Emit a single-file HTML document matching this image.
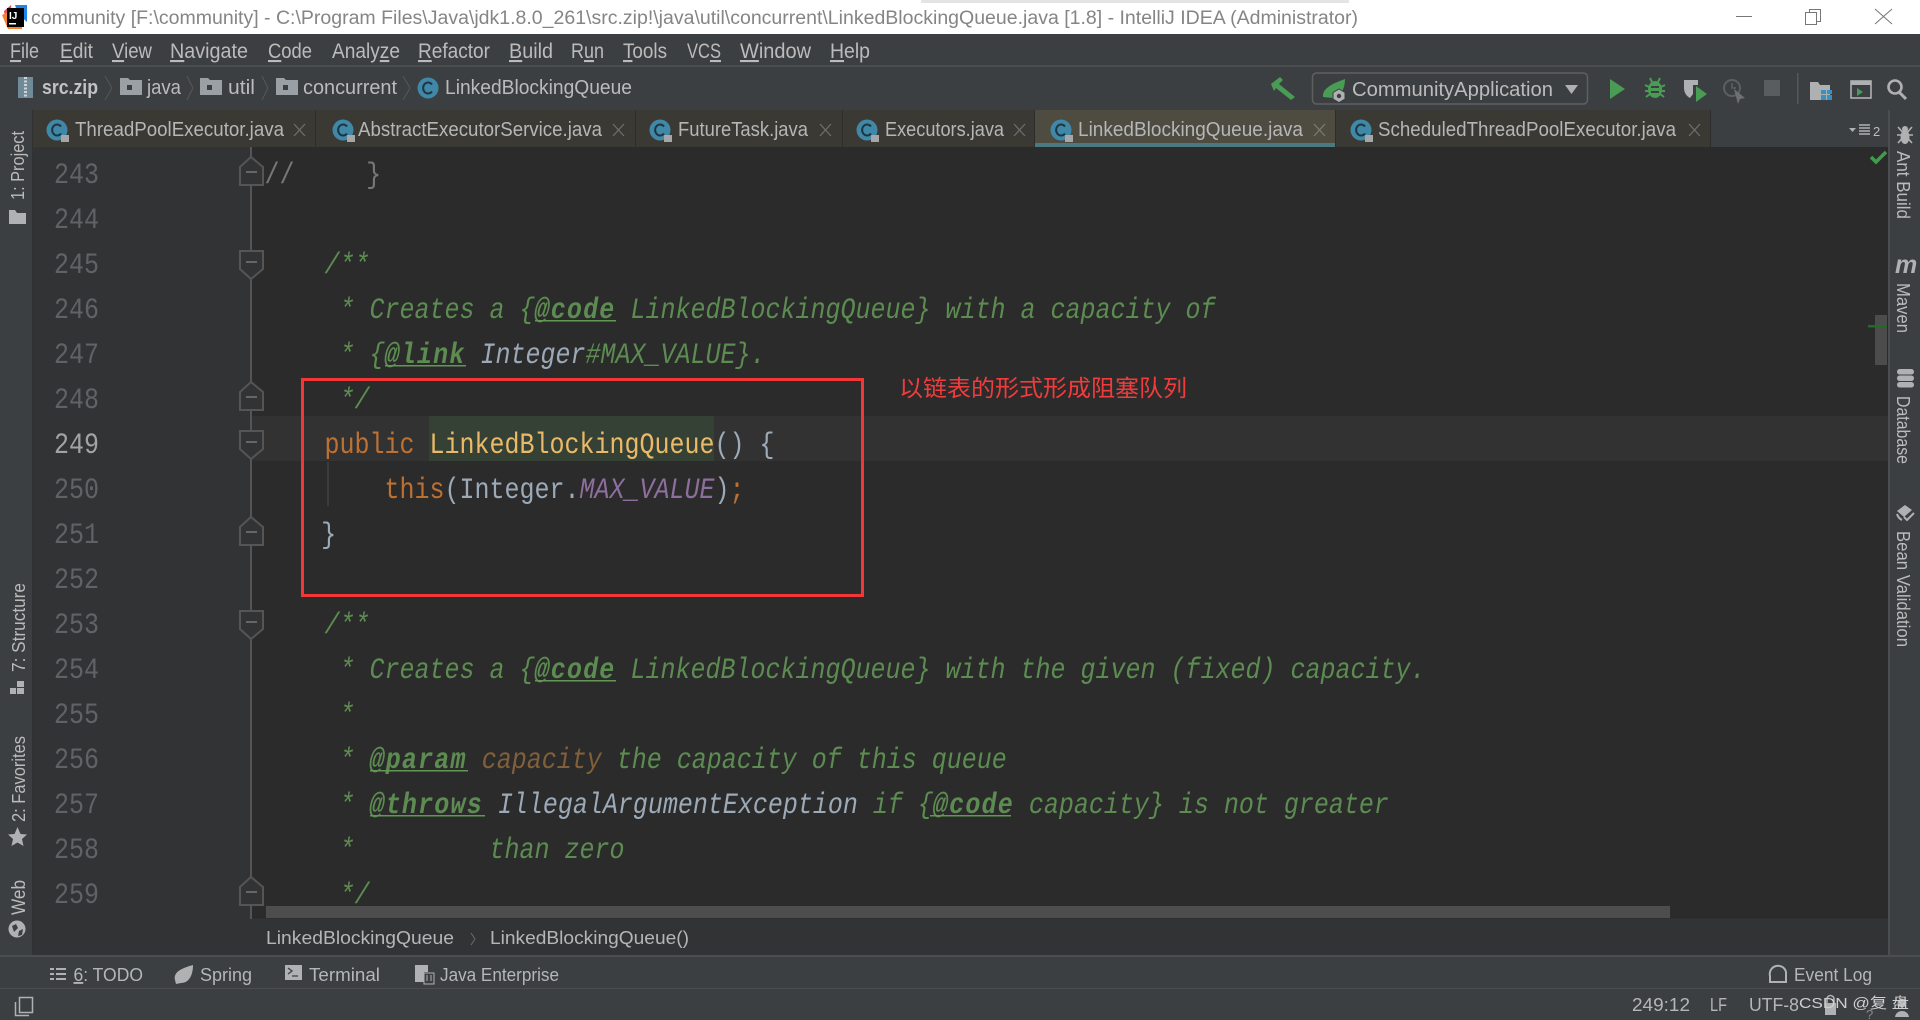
<!DOCTYPE html>
<html lang="en">
<head>
<meta charset="utf-8">
<title>IntelliJ IDEA</title>
<style>
html,body{margin:0;padding:0;background:#3c3f41;width:1920px;height:1020px;overflow:hidden}
svg{display:block}
text{font-family:"Liberation Sans","Noto Sans CJK SC",sans-serif;white-space:pre}
.m{font-size:21px;fill:#bbb}
.n{font-size:20px;fill:#bbb}
.t{font-size:20px;fill:#b4b6b8}
.b{font-size:18.5px;fill:#b4b6b8}
.v{font-size:18px;fill:#bbb}
.code text{font-family:"Liberation Mono",monospace;font-size:30px;fill:#a9b7c6;fill-opacity:.9}
.ln text{font-family:"Liberation Mono",monospace;font-size:30px;fill:#606366}
.d{fill:#629755;font-style:italic}
.dt{fill:#629755;font-style:italic;font-weight:bold;letter-spacing:1.44px}
.di{fill:#a9b7c6;font-style:italic}
.dp{fill:#8a653b;font-style:italic}
.k{fill:#cc7832}
.f{fill:#ffc66d}
.s{fill:#9876aa;font-style:italic}
.g{fill:#808080}
.u{text-decoration:underline}
.fold{fill:#313335;stroke:#555;stroke-width:2}
</style>
</head>
<body>
<svg xmlns="http://www.w3.org/2000/svg" width="1920" height="1020" viewBox="0 0 1920 1020">
<defs>
<g id="c"><circle cx="0" cy="0" r="10.5" fill="#3f88a8"/><path d="M4 -3.5A5 5.500 0 1 0 4 3.500" fill="none" stroke="#20353f" stroke-width="2"/></g>
<g id="cl"><use href="#c"/><rect x="4" y="5" width="8" height="7" fill="#a4a6a8"/></g>
<g id="fo"><path d="M0 3h8l2 2h12v15H0z" fill="#9aa0a4"/><rect x="7" y="10" width="5" height="5" fill="#3c3f41"/></g>
<path id="up" class="fold" d="M-11 28V10L0 0L12 10V28Z"/>
<path id="dn" class="fold" d="M-11 0H12V18L0 28L-11 18Z"/>
<rect id="mi" x="-6" y="-1" width="11" height="2" fill="#666"/>
</defs>

<!-- base -->
<rect width="1920" height="1020" fill="#3c3f41"/>

<!-- title bar -->
<rect width="1920" height="34" fill="#fff"/>
<rect x="921" y="0" width="428" height="3" fill="#e4e4e4"/>
<path d="M4 11L11 5L13 28L6 25Z" fill="#f04a6c"/>
<path d="M15 5H27L27 22L18 14Z" fill="#1f86e8"/>
<path d="M2 15L8 29H22V24L8 12Z" fill="#f9822c"/>
<rect x="7" y="8" width="17" height="19" fill="#000"/>
<text x="9" y="19" style="font-size:10px;font-weight:bold;fill:#fff">IJ</text>
<rect x="9" y="23" width="7" height="1.5" fill="#fff"/>
<text x="31" y="24" textLength="1327" lengthAdjust="spacingAndGlyphs" style="font-size:19px;fill:#858585">community [F:\community] - C:\Program Files\Java\jdk1.8.0_261\src.zip!\java\util\concurrent\LinkedBlockingQueue.java [1.8] - IntelliJ IDEA (Administrator)</text>
<path d="M1736 16.5H1752" stroke="#777" stroke-width="1"/>
<path d="M1805.5 12.5H1816.5V24.5H1805.5ZM1809.5 12.5V9.5H1820.5V21.5H1816.5" fill="none" stroke="#777"/>
<path d="M1875 9L1892 24M1892 9L1875 24" stroke="#777" stroke-width="1"/>

<!-- menu -->
<rect y="65" width="1920" height="2" fill="#4b4d4f"/>
<text class="m" x="10" y="58" textLength="29" lengthAdjust="spacingAndGlyphs"><tspan class="u">F</tspan>ile</text>
<text class="m" x="60" y="58" textLength="33" lengthAdjust="spacingAndGlyphs"><tspan class="u">E</tspan>dit</text>
<text class="m" x="112" y="58" textLength="40" lengthAdjust="spacingAndGlyphs"><tspan class="u">V</tspan>iew</text>
<text class="m" x="170" y="58" textLength="78" lengthAdjust="spacingAndGlyphs"><tspan class="u">N</tspan>avigate</text>
<text class="m" x="268" y="58" textLength="44" lengthAdjust="spacingAndGlyphs"><tspan class="u">C</tspan>ode</text>
<text class="m" x="332" y="58" textLength="68" lengthAdjust="spacingAndGlyphs">Analy<tspan class="u">z</tspan>e</text>
<text class="m" x="418" y="58" textLength="72" lengthAdjust="spacingAndGlyphs"><tspan class="u">R</tspan>efactor</text>
<text class="m" x="509" y="58" textLength="44" lengthAdjust="spacingAndGlyphs"><tspan class="u">B</tspan>uild</text>
<text class="m" x="571" y="58" textLength="33" lengthAdjust="spacingAndGlyphs">R<tspan class="u">u</tspan>n</text>
<text class="m" x="623" y="58" textLength="44" lengthAdjust="spacingAndGlyphs"><tspan class="u">T</tspan>ools</text>
<text class="m" x="687" y="58" textLength="34" lengthAdjust="spacingAndGlyphs">VC<tspan class="u">S</tspan></text>
<text class="m" x="740" y="58" textLength="71" lengthAdjust="spacingAndGlyphs"><tspan class="u">W</tspan>indow</text>
<text class="m" x="830" y="58" textLength="40" lengthAdjust="spacingAndGlyphs"><tspan class="u">H</tspan>elp</text>

<!-- nav bar -->
<rect x="18" y="77" width="15" height="21" fill="#6f8a99"/>
<path d="M25.5 77V98" stroke="#d0d4d6" stroke-width="3" stroke-dasharray="2 1.5"/>
<text class="n" x="42" y="94" textLength="56" lengthAdjust="spacingAndGlyphs" style="font-weight:bold;fill:#c0c2c4">src.zip</text>
<path d="M105 76L112 88L105 100" fill="none" stroke="#55585a" stroke-width="1"/>
<use href="#fo" x="120" y="75"/>
<text class="n" x="147" y="94" textLength="34" lengthAdjust="spacingAndGlyphs">java</text>
<path d="M187 76L193 88L187 100" fill="none" stroke="#55585a" stroke-width="1"/>
<use href="#fo" x="200" y="75"/>
<text class="n" x="228" y="94" textLength="27" lengthAdjust="spacingAndGlyphs">util</text>
<path d="M262 76L268 88L262 100" fill="none" stroke="#55585a" stroke-width="1"/>
<use href="#fo" x="276" y="75"/>
<text class="n" x="303" y="94" textLength="94" lengthAdjust="spacingAndGlyphs">concurrent</text>
<path d="M403 76L410 88L403 100" fill="none" stroke="#55585a" stroke-width="1"/>
<use href="#c" x="428" y="88"/>
<text class="n" x="445" y="94" textLength="187" lengthAdjust="spacingAndGlyphs">LinkedBlockingQueue</text>

<!-- toolbar right -->
<path d="M1271 84L1280 77L1283 80L1279 84L1295 97L1291 100L1276 88L1274 91Z" fill="#499c54"/>
<rect x="1312.5" y="73" width="275" height="31" rx="4" fill="none" stroke="#5e6060" stroke-width="1.5"/>
<path d="M1323 97C1322 89 1331 84 1345 79C1345 88 1341 97 1333 98Z" fill="#499c54"/>
<path d="M1339 89L1345 92.500V99L1339 102.500L1333 99V92.500Z" fill="#aeb0b2" stroke="#3c3f41"/>
<circle cx="1339" cy="96" r="2.2" fill="#3c3f41"/>
<text class="n" x="1352" y="96" textLength="201" lengthAdjust="spacingAndGlyphs">CommunityApplication</text>
<path d="M1565 85H1578L1571.5 94Z" fill="#aeb0b2"/>
<path d="M1610 79L1625 89L1610 99Z" fill="#499c54"/>
<!-- bug -->
<path d="M1650 78L1652 82M1660 78L1658 82M1645 85L1649 87M1665 85L1661 87M1645 91H1649M1665 91H1661M1646 97L1650 94M1664 97L1660 94" stroke="#499c54" stroke-width="2"/>
<ellipse cx="1655" cy="89.500" rx="7" ry="8.500" fill="#499c54"/>
<rect x="1651" y="86" width="8" height="2" fill="#3c3f41"/><rect x="1651" y="91" width="8" height="2" fill="#3c3f41"/>
<!-- coverage -->
<path d="M1684 80H1698V85H1693V94L1690 98C1686 96 1684 92 1684 88Z" fill="#aeb0b2"/>
<path d="M1696 86L1707 94L1696 102Z" fill="#499c54"/>
<circle cx="1732" cy="88" r="8" fill="none" stroke="#5d6062" stroke-width="2"/>
<path d="M1732 83V88H1736" fill="none" stroke="#5d6062" stroke-width="1.5"/>
<path d="M1734 89L1745 98L1740 99L1738 104Z" fill="#6e7072"/>
<rect x="1764" y="80" width="16" height="16" fill="#5a5d5f"/>
<rect x="1797" y="73" width="1.5" height="31" fill="#555759"/>
<path d="M1810 82H1818L1820 85H1830V100H1810Z" fill="#aeb0b2"/>
<rect x="1821" y="90" width="5" height="4" fill="#3592c4"/><rect x="1827" y="90" width="5" height="4" fill="#3592c4"/><rect x="1821" y="95" width="5" height="5" fill="#3592c4"/><rect x="1827" y="95" width="5" height="5" fill="#3592c4"/>
<rect x="1851" y="81" width="20" height="17" fill="none" stroke="#aeb0b2" stroke-width="1.6"/><rect x="1851" y="81" width="20" height="4" fill="#aeb0b2"/>
<path d="M1857 88L1863 92L1857 96Z" fill="#499c54"/>
<circle cx="1895" cy="87" r="6.5" fill="none" stroke="#aeb0b2" stroke-width="2.6"/>
<path d="M1899 92L1906 99" stroke="#aeb0b2" stroke-width="3"/>

<!-- tabs -->
<rect x="33" y="110" width="1677" height="37" fill="#3b3933"/>
<rect x="1035" y="110" width="300" height="33" fill="#4e4b41"/>
<rect x="1035" y="143" width="300" height="4" fill="#4a7a80"/>
<path d="M315.5 110V147M635.5 110V147M842.5 110V147M1034.5 110V147M1335.5 110V147M1710.5 110V147" stroke="#2d2d2d"/>
<use href="#cl" x="57" y="130"/>
<text class="t" x="75" y="136" textLength="209" lengthAdjust="spacingAndGlyphs">ThreadPoolExecutor.java</text>
<path d="M294 124L305 136M305 124L294 136" stroke="#6d6f71" stroke-width="1.2"/>
<use href="#cl" x="343" y="130"/>
<text class="t" x="358" y="136" textLength="244" lengthAdjust="spacingAndGlyphs">AbstractExecutorService.java</text>
<path d="M613 124L624 136M624 124L613 136" stroke="#6d6f71" stroke-width="1.2"/>
<use href="#cl" x="660" y="130"/>
<text class="t" x="678" y="136" textLength="130" lengthAdjust="spacingAndGlyphs">FutureTask.java</text>
<path d="M820 124L831 136M831 124L820 136" stroke="#6d6f71" stroke-width="1.2"/>
<use href="#cl" x="867" y="130"/>
<text class="t" x="885" y="136" textLength="119" lengthAdjust="spacingAndGlyphs">Executors.java</text>
<path d="M1014 124L1025 136M1025 124L1014 136" stroke="#6d6f71" stroke-width="1.2"/>
<use href="#cl" x="1061" y="130"/>
<text class="t" x="1078" y="136" textLength="225" lengthAdjust="spacingAndGlyphs">LinkedBlockingQueue.java</text>
<path d="M1314 124L1325 136M1325 124L1314 136" stroke="#7d7b72" stroke-width="1.2"/>
<use href="#cl" x="1361" y="130"/>
<text class="t" x="1378" y="136" textLength="298" lengthAdjust="spacingAndGlyphs">ScheduledThreadPoolExecutor.java</text>
<path d="M1689 124L1700 136M1700 124L1689 136" stroke="#6d6f71" stroke-width="1.2"/>
<path d="M1849 128H1856L1852.5 132Z" fill="#aeb0b2"/>
<path d="M1859 125H1870M1859 128H1870M1859 131H1870M1859 134H1870" stroke="#aeb0b2" stroke-width="1.5"/>
<text x="1873" y="136" style="font-size:13px;fill:#bbb">2</text>

<!-- editor -->
<rect x="33" y="147" width="1855" height="772" fill="#2b2b2b"/>
<rect x="33" y="147" width="218" height="772" fill="#313335"/>
<rect x="32" y="110" width="1" height="845" fill="#2f3133"/>
<rect x="251" y="416" width="1637" height="45" fill="#323232"/>
<rect x="429" y="416" width="285" height="45" fill="#344134"/>
<rect x="327" y="462" width="2" height="44" fill="#3b3b3b"/>

<!-- fold line + markers -->
<rect x="250" y="147" width="2" height="772" fill="#555"/>
<use href="#up" x="251" y="157"/><use href="#mi" x="252" y="172"/>
<use href="#dn" x="251" y="251"/><use href="#mi" x="252" y="262"/>
<use href="#up" x="251" y="382"/><use href="#mi" x="252" y="397"/>
<use href="#dn" x="251" y="431"/><use href="#mi" x="252" y="442"/>
<use href="#up" x="251" y="517"/><use href="#mi" x="252" y="532"/>
<use href="#dn" x="251" y="611"/><use href="#mi" x="252" y="622"/>
<use href="#up" x="251" y="877"/><use href="#mi" x="252" y="892"/>

<!-- line numbers -->
<g class="ln" transform="translate(54,0) scale(.8333,1)">
<text y="183">243</text><text y="228">244</text><text y="273">245</text><text y="318">246</text><text y="363">247</text><text y="408">248</text><text y="453" style="fill:#a4a3a3">249</text><text y="498">250</text><text y="543">251</text><text y="588">252</text><text y="633">253</text><text y="678">254</text><text y="723">255</text><text y="768">256</text><text y="813">257</text><text y="858">258</text><text y="903">259</text>
</g>

<!-- code -->
<g class="code" transform="translate(264.5,0) scale(.8333,1)">
<text y="183" xml:space="preserve"><tspan class="g">//    </tspan><tspan class="g" dx="-4"> }</tspan></text>
<text y="273" xml:space="preserve"><tspan class="d">    /**</tspan></text>
<text y="318" xml:space="preserve"><tspan class="d">     * Creates a {</tspan><tspan class="dt">@code</tspan><tspan class="d"> LinkedBlockingQueue} with a capacity of</tspan></text>
<text y="363" xml:space="preserve"><tspan class="d">     * {</tspan><tspan class="dt">@link</tspan><tspan class="di"> Integer</tspan><tspan class="d">#MAX_VALUE}.</tspan></text>
<text y="408" xml:space="preserve"><tspan class="d">     */</tspan></text>
<text y="453" xml:space="preserve"><tspan class="k">    public </tspan><tspan class="f">LinkedBlockingQueue</tspan>() {</text>
<text y="498" xml:space="preserve"><tspan class="k">        this</tspan>(Integer.<tspan class="s">MAX_VALUE</tspan>)<tspan class="k">;</tspan></text>
<text y="543" x="-4" xml:space="preserve">    }</text>
<text y="633" xml:space="preserve"><tspan class="d">    /**</tspan></text>
<text y="678" xml:space="preserve"><tspan class="d">     * Creates a {</tspan><tspan class="dt">@code</tspan><tspan class="d"> LinkedBlockingQueue} with the given (fixed) capacity.</tspan></text>
<text y="723" xml:space="preserve"><tspan class="d">     *</tspan></text>
<text y="768" xml:space="preserve"><tspan class="d">     * </tspan><tspan class="dt">@param</tspan><tspan class="dp"> capacity</tspan><tspan class="d"> the capacity of this queue</tspan></text>
<text y="813" xml:space="preserve"><tspan class="d">     * </tspan><tspan class="dt">@throws</tspan><tspan class="di"> IllegalArgumentException</tspan><tspan class="d"> if {</tspan><tspan class="dt">@code</tspan><tspan class="d"> capacity} is not greater</tspan></text>
<text y="858" xml:space="preserve"><tspan class="d">     *         than zero</tspan></text>
<text y="903" xml:space="preserve"><tspan class="d">     */</tspan></text>
</g>
<!-- javadoc tag underlines -->
<g fill="#629755">
<rect x="535" y="320" width="81" height="1.500"/>
<rect x="385" y="365" width="81" height="1.500"/>
<rect x="535" y="680" width="81" height="1.500"/>
<rect x="370" y="770" width="98" height="1.500"/>
<rect x="370" y="815" width="115" height="1.500"/>
<rect x="930" y="815" width="81" height="1.500"/>
</g>

<!-- annotation -->
<rect x="302.5" y="379.5" width="560" height="216" fill="none" stroke="#f33636" stroke-width="3"/>
<text x="899" y="396" textLength="288" lengthAdjust="spacingAndGlyphs" style="font-size:23px;fill:#f23c3c;font-family:'Liberation Sans','Noto Sans CJK SC',sans-serif">以链表的形式形成阻塞队列</text>

<!-- h scrollbar -->
<rect x="252" y="906" width="14" height="13" fill="#2b2b2b"/>
<rect x="266" y="906" width="1404" height="12" fill="#4d4d4d"/>
<rect x="252" y="918" width="1636" height="1" fill="#2f2f2f"/>

<!-- right gutter marks -->
<path d="M1871 157L1876 162L1886 152" fill="none" stroke="#3f9c4c" stroke-width="3.5"/>
<rect x="1875" y="315" width="12" height="50" fill="#4c4c4c"/>
<rect x="1868" y="325" width="19" height="2.5" fill="#1f6d22"/>

<!-- breadcrumb -->
<rect x="33" y="919" width="1855" height="36" fill="#313335"/>
<text class="b" x="266" y="944" textLength="188" lengthAdjust="spacingAndGlyphs">LinkedBlockingQueue</text>
<path d="M471 933L475 939L471 945" fill="none" stroke="#6a6c6e"/>
<text class="b" x="490" y="944" textLength="199" lengthAdjust="spacingAndGlyphs">LinkedBlockingQueue()</text>

<!-- right strip -->
<rect x="1888" y="110" width="2" height="845" fill="#4b4d4f"/>
<rect x="1890" y="110" width="30" height="845" fill="#3c3f41"/>
<ellipse cx="1905" cy="137" rx="4.500" ry="7" fill="#afb1b3"/>
<circle cx="1905" cy="129" r="3" fill="#afb1b3"/>
<path d="M1898 127L1912 143M1912 127L1898 143M1897 135H1913" stroke="#afb1b3" stroke-width="1.6"/>
<text class="v" transform="translate(1897,151) rotate(90)" textLength="68" lengthAdjust="spacingAndGlyphs">Ant Build</text>
<text transform="translate(1895,273)" style="font-size:25px;font-weight:bold;font-style:italic;fill:#afb1b3">m</text>
<text class="v" transform="translate(1897,283) rotate(90)" textLength="50" lengthAdjust="spacingAndGlyphs">Maven</text>
<rect x="1897" y="369" width="17" height="5.500" rx="2.700" fill="#afb1b3"/>
<rect x="1897" y="375.500" width="17" height="5.500" rx="2.700" fill="#afb1b3"/>
<rect x="1897" y="382" width="17" height="5.500" rx="2.700" fill="#afb1b3"/>
<path d="M1897 511L1905 505L1912 510L1904 517Z" fill="#afb1b3"/>
<path d="M1897 514C1898 517 1900 519 1902 520M1904 517L1907 520L1914 513" fill="none" stroke="#afb1b3" stroke-width="2"/>
<text class="v" transform="translate(1897,396) rotate(90)" textLength="68" lengthAdjust="spacingAndGlyphs">Database</text>
<text class="v" transform="translate(1897,531) rotate(90)" textLength="116" lengthAdjust="spacingAndGlyphs">Bean Validation</text>

<!-- left strip -->
<text class="v" transform="translate(24,200) rotate(-90)" textLength="69" lengthAdjust="spacingAndGlyphs">1: Project</text>
<path d="M9 210H15L17 213H26V224H9Z" fill="#afb1b3"/>
<text class="v" transform="translate(25,672) rotate(-90)" textLength="89" lengthAdjust="spacingAndGlyphs">7: Structure</text>
<path d="M17 681h7v6h-7zM10 688h6v6h-6zM17 688h7v6h-7z" fill="#afb1b3"/>
<text class="v" transform="translate(25,822) rotate(-90)" textLength="86" lengthAdjust="spacingAndGlyphs">2: Favorites</text>
<path d="M17.5 827L20.5 834L27 834.5L22 839L23.5 846L17.5 842.5L11.500 846L13 839L8 834.5L14.500 834Z" fill="#afb1b3"/>
<text class="v" transform="translate(25,915) rotate(-90)" textLength="35" lengthAdjust="spacingAndGlyphs" style="font-size:19px">Web</text>
<circle cx="17" cy="929" r="8.5" fill="#afb1b3"/>
<path d="M12 926L16 924L18 928L14 932ZM19 931L23 929L22 935L18 936Z" fill="#3c3f41"/>

<!-- bottom tool bar -->
<rect y="955" width="1920" height="2" fill="#4b4d4f"/>
<rect y="988" width="1920" height="1" fill="#4b4d4f"/>
<path d="M50 968h4v2h-4zM56 968h10v2H56zM50 973h4v2h-4zM56 973h10v2H56zM50 978h4v2h-4zM56 978h10v2H56z" fill="#afb1b3"/>
<text class="b" x="73.5" y="981" textLength="69.5" lengthAdjust="spacingAndGlyphs"><tspan class="u">6</tspan>: TODO</text>
<path d="M175 980C173 972 182 968 193 965C193 975 189 983 181 983L176 984Z" fill="#afb1b3"/>
<text class="b" x="200" y="981" textLength="52" lengthAdjust="spacingAndGlyphs">Spring</text>
<rect x="285" y="965" width="17" height="15" fill="#afb1b3"/>
<path d="M288 968L292 971L288 974M292 976H298" fill="none" stroke="#3c3f41" stroke-width="1.3"/>
<text class="b" x="309" y="981" textLength="71" lengthAdjust="spacingAndGlyphs">Terminal</text>
<path d="M415 965H428V972H424V982H415Z" fill="#afb1b3"/>
<rect x="424" y="973" width="10" height="11" fill="#3c3f41" stroke="#afb1b3"/>
<path d="M426 976H428M426 978H428M426 980H428M430 976H432M430 978H432M430 980H432" stroke="#afb1b3"/>
<text class="b" x="440" y="981" textLength="119" lengthAdjust="spacingAndGlyphs">Java Enterprise</text>
<path d="M1770 982H1786V972A7.5 7.5 0 1 0 1770 976Z" fill="none" stroke="#afb1b3" stroke-width="2"/>
<text class="b" x="1794" y="981" textLength="78" lengthAdjust="spacingAndGlyphs">Event Log</text>

<!-- status bar -->
<path d="M19.5 997.5H32.5V1012.5H19.5Z" fill="none" stroke="#afb1b3" stroke-width="1.5"/>
<path d="M15.5 1002V1015.5H29" fill="none" stroke="#afb1b3" stroke-width="1.5"/>
<text class="b" x="1632" y="1011" textLength="58" lengthAdjust="spacingAndGlyphs">249:12</text>
<text class="b" x="1710" y="1011" textLength="17" lengthAdjust="spacingAndGlyphs">LF</text>
<text class="b" x="1749" y="1011" textLength="50" lengthAdjust="spacingAndGlyphs">UTF-8</text>
<rect x="1825" y="1003" width="11" height="12" fill="#afb1b3"/><path d="M1827 1003V999a3.500 3.500 0 0 1 7 0V1003" fill="none" stroke="#afb1b3" stroke-width="1.6"/>
<text x="1866" y="1019" style="font-size:13px;fill:#8a8c8e">?</text>
<circle cx="1902" cy="1003" r="4.500" fill="#afb1b3"/><path d="M1895 1017C1896 1009 1908 1009 1909 1017Z" fill="#afb1b3"/>
<text x="1799" y="1008" textLength="110" lengthAdjust="spacingAndGlyphs" style="font-size:15px;fill:#cfcfcf">CSDN @复 盘</text>
</svg>
</body>
</html>
